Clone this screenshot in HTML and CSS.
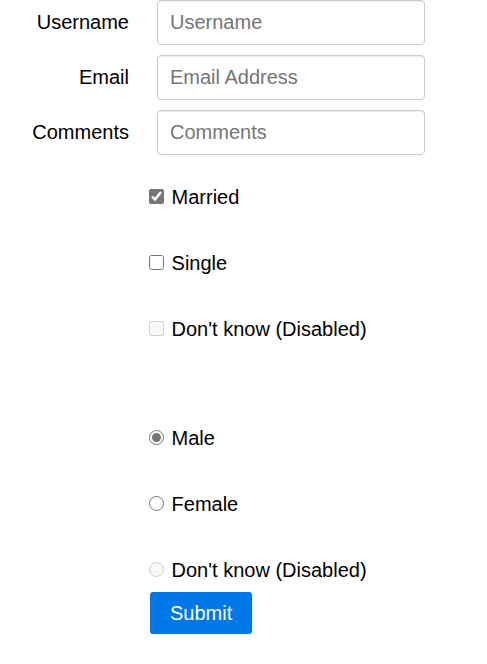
FILE: index.html
```html
<!DOCTYPE html>
<html>
<head>
<meta charset="utf-8">
<link rel="stylesheet" href="styles.css">
</head>
<body>
<form class="form">
  <div class="row">
    <label class="lbl" for="u">Username</label>
    <input class="field" id="u" type="text" placeholder="Username">
  </div>
  <div class="row">
    <label class="lbl" for="e">Email</label>
    <input class="field" id="e" type="email" placeholder="Email Address">
  </div>
  <div class="row">
    <label class="lbl" for="c">Comments</label>
    <input class="field" id="c" type="text" placeholder="Comments">
  </div>

  <div class="group checks">
    <label class="opt"><input class="ctl" type="checkbox" checked> Married</label>
    <label class="opt"><input class="ctl" type="checkbox"> Single</label>
    <label class="opt"><input class="ctl" type="checkbox" disabled> Don't know (Disabled)</label>
  </div>

  <div class="group radios">
    <label class="opt"><input class="ctl rad" type="radio" name="g" checked> Male</label>
    <label class="opt"><input class="ctl rad" type="radio" name="g"> Female</label>
    <label class="opt last"><input class="ctl rad" type="radio" name="g" disabled> Don't know (Disabled)</label>
  </div>

  <div class="actions">
    <button class="btn" type="button">Submit</button>
  </div>
</form>
</body>
</html>
```
FILE: styles.css
```css
html, body {
  margin: 0;
  padding: 0;
  background: #fff;
}
body {
  font-family: "Liberation Sans", Arial, sans-serif;
  font-size: 20px;
  color: #000;
}
.form {
  display: flex;
  flex-direction: column;
}
.row {
  display: flex;
  align-items: center;
  height: 45px;
  margin-bottom: 10px;
}
.lbl {
  width: 129px;
  text-align: right;
  line-height: 23px;
}
.field {
  box-sizing: border-box;
  margin: 0 0 0 28px;
  width: 268px;
  height: 45px;
  padding: 0 12px;
  border: 1px solid #ccc;
  border-radius: 4px;
  box-shadow: inset 0 1px 1px rgba(0, 0, 0, 0.075);
  font-family: "Liberation Sans", Arial, sans-serif;
  font-size: 20px;
  color: #555;
  background: #fff;
  outline: none;
}
.field::placeholder {
  color: #757575;
}
.group {
  display: flex;
  flex-direction: column;
  padding-left: 146px;
}
.checks {
  margin-top: 21px;
}
.radios {
  margin-top: 43px;
}
.opt {
  display: block;
  line-height: 23px;
  height: 23px;
  margin-bottom: 43px;
}
.opt.last {
  margin-bottom: 0;
}
.ctl {
  width: 15px;
  height: 15px;
  margin: 0 2px 0 3px;
  vertical-align: baseline;
  accent-color: #767676;
}
.rad {
  margin: 0 2px 0 3px;
}
.actions {
  padding-left: 150px;
  margin-top: 10px;
}
.btn {
  box-sizing: border-box;
  height: 42px;
  padding: 0 20px;
  border: none;
  border-radius: 3px;
  background: #0077e6;
  color: #fff;
  font-family: "Liberation Sans", Arial, sans-serif;
  font-size: 20px;
  line-height: 24px;
}
```
